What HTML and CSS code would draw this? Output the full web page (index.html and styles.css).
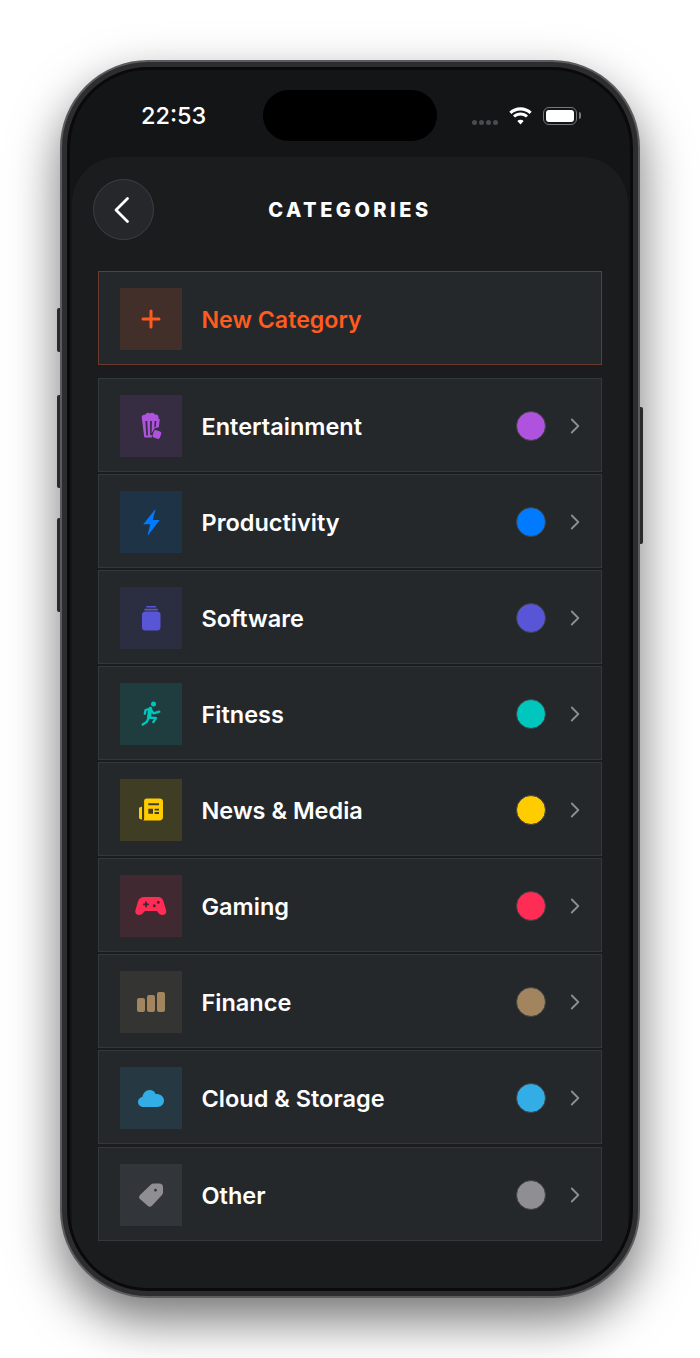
FILE: index.html
```html
<!DOCTYPE html>
<html lang="en">
<head>
    <meta charset="UTF-8">
    <meta name="viewport" content="width=device-width, initial-scale=1.0">
    <title>Categories</title>
    <link rel="stylesheet" href="styles.css">
</head>
<body>

<div class="phone">
    <span class="side-btn mute"></span>
    <span class="side-btn vol-up"></span>
    <span class="side-btn vol-down"></span>
    <span class="side-btn power"></span>

    <div class="screen">
        <div class="status-bar">
            <div class="time">22:53</div>
            <div class="island"></div>
            <div class="status-icons">
                <div class="signal"><i></i><i></i><i></i><i></i></div>
                <svg class="wifi" width="23" height="18" viewBox="1 0 21 17.5" preserveAspectRatio="none">
                    <path d="M11.5 3.4c3.2 0 6.1 1.2 8.3 3.3l1.9-2.1C19 2 15.4.3 11.5.3S4 2 1.3 4.6l1.9 2.1c2.2-2.1 5.1-3.300 8.300-3.300z" fill="#fff"/>
                    <path d="M11.5 8.3c1.900 0 3.700.7 5 2l1.900-2.100c-1.800-1.800-4.300-2.900-6.900-2.900S6.400 6.400 4.600 8.200l1.900 2.100c1.300-1.300 3.100-2 5-2z" fill="#fff"/>
                    <path d="M11.5 12.400c-1.100 0-2.100.4-2.900 1.200l2.900 3.500 2.900-3.500c-.8-.8-1.800-1.200-2.900-1.200z" fill="#fff"/>
                </svg>
                <div class="battery"><div class="battery-fill"></div></div>
            </div>
        </div>

        <div class="panel">
            <div class="top-bar">
                <button class="back-btn">
                    <svg width="20" height="30" viewBox="0 0 20 30"><path d="M15.5 3.5 4 15l11.5 11.5" fill="none" stroke="#fff" stroke-width="2.8" stroke-linecap="round" stroke-linejoin="round"/></svg>
                </button>
                <div class="title">CATEGORIES</div>
            </div>

            <div class="new-row">
                <div class="tile">
                    <svg width="32" height="32" viewBox="0 0 32 32"><path d="M16 8v16M8 16h16" fill="none" stroke="currentColor" stroke-width="3" stroke-linecap="round"/></svg>
                </div>
                <div class="name">New Category</div>
            </div>

            <div class="list">
                <div class="row purple">
                    <div class="tile">
                        <svg width="32" height="32" viewBox="0 0 32 32">
                            <path d="M6.8 8.200c-.7-2.400 1.300-4.100 3.400-3.400.6-1.900 3.400-2.900 5-1.400 1.600-1.200 4.100-.6 4.700 1.300 2.300-.6 4.200 1.300 3.600 3.500l-.2 1.800H7.100z" fill="currentColor"/>
                            <path fill-rule="evenodd" d="M7 9h17.800l-1 8.300-4.100.9-3.200 5.300.5 4H10.200c-.6 0-1-.4-1.100-.9zM10.300 11l1 14.500h1.700l-.8-14.500zM15.100 11v14h1.500l.3-14zM19.700 11l-.5 6.500 1.500-.4.700-6.100z" fill="currentColor"/>
                            <rect x="18" y="20.600" width="7.800" height="7.800" rx="2" transform="rotate(20 21.900 24.500)" fill="currentColor"/>
                        </svg>
                    </div>
                    <div class="name">Entertainment</div>
                    <div class="dot"></div>
                    <svg class="chevron" width="10" height="16" viewBox="0 0 10 16"><path d="M1.8 1.500 8.300 8l-6.500 6.500" fill="none" stroke="currentColor" stroke-width="1.8" stroke-linecap="round" stroke-linejoin="round"/></svg>
                </div>

                <div class="row blue">
                    <div class="tile">
                        <svg width="32" height="32" viewBox="0 0 32 32"><path d="M19.8 3.700 8.300 18.200h6.900l-2.500 10.600c-.1.500.3.700.6.300l11.400-15h-7l2.700-10c.2-.6-.3-.8-.6-.4z" fill="currentColor"/></svg>
                    </div>
                    <div class="name">Productivity</div>
                    <div class="dot"></div>
                    <svg class="chevron" width="10" height="16" viewBox="0 0 10 16"><path d="M1.8 1.500 8.300 8l-6.500 6.500" fill="none" stroke="currentColor" stroke-width="1.8" stroke-linecap="round" stroke-linejoin="round"/></svg>
                </div>

                <div class="row indigo">
                    <div class="tile">
                        <svg width="32" height="32" viewBox="0 0 32 32">
                            <rect x="7" y="9.6" width="18.5" height="19" rx="3.5" fill="currentColor"/>
                            <rect x="9.2" y="6.7" width="14" height="1.7" rx=".8" fill="currentColor"/>
                            <rect x="11.2" y="3.9" width="10" height="1.7" rx=".8" fill="currentColor"/>
                        </svg>
                    </div>
                    <div class="name">Software</div>
                    <div class="dot"></div>
                    <svg class="chevron" width="10" height="16" viewBox="0 0 10 16"><path d="M1.8 1.500 8.300 8l-6.500 6.500" fill="none" stroke="currentColor" stroke-width="1.8" stroke-linecap="round" stroke-linejoin="round"/></svg>
                </div>

                <div class="row teal">
                    <div class="tile">
                        <svg width="32" height="32" viewBox="0 0 32 32">
                            <circle cx="18.5" cy="6" r="2.5" fill="currentColor"/>
                            <path d="M15.3 10.800 14 19" fill="none" stroke="currentColor" stroke-width="4" stroke-linecap="round"/>
                            <path d="M24.3 13.700 18.500 15.300l-3.200-4.500-4.700 1.200-.8 3.700M14 19.500l7 .6-2.700 4M13.700 19.700l-2 4.200-4 2.600" fill="none" stroke="currentColor" stroke-width="2.3" stroke-linecap="round" stroke-linejoin="round"/>
                        </svg>
                    </div>
                    <div class="name">Fitness</div>
                    <div class="dot"></div>
                    <svg class="chevron" width="10" height="16" viewBox="0 0 10 16"><path d="M1.8 1.500 8.300 8l-6.500 6.500" fill="none" stroke="currentColor" stroke-width="1.8" stroke-linecap="round" stroke-linejoin="round"/></svg>
                </div>

                <div class="row yellow">
                    <div class="tile">
                        <svg width="32" height="32" viewBox="0 0 32 32">
                            <path d="M4 13.800 7 12.400v13.100c-1.800 0-3-.6-3-2.200z" fill="currentColor"/>
                            <path fill-rule="evenodd" d="M11.6 4.500h13.100c2 0 3.300 1.200 3.300 3.200v15.600c0 2-1.300 3.200-3.300 3.200H8.200c.6-.5.900-1.100.9-1.800V7c0-1.500 1-2.500 2.500-2.500zM13.300 9.300v1.900H24V9.300zM13.300 14.800v5h4.700v-5zm6.300 0v1.800H24v-1.800zm0 3.300v1.800H24v-1.800z" fill="currentColor"/>
                        </svg>
                    </div>
                    <div class="name">News &amp; Media</div>
                    <div class="dot"></div>
                    <svg class="chevron" width="10" height="16" viewBox="0 0 10 16"><path d="M1.8 1.500 8.300 8l-6.500 6.500" fill="none" stroke="currentColor" stroke-width="1.8" stroke-linecap="round" stroke-linejoin="round"/></svg>
                </div>

                <div class="row red">
                    <div class="tile">
                        <svg width="32" height="32" viewBox="0 0 32 32">
                            <path fill-rule="evenodd" d="M9 7h14c3 0 4.500 1.500 5.500 4.500l2.500 8.500c.8 3-.8 5-3.500 5-2 0-3.200-1-4.200-2.300L22 21H10l-1.800 1.700C7.200 24 6 25 4 25c-2.700 0-4.300-2-3.500-5L3 11.500C4 8.500 6 7 9 7zM10.100 11.500v2h-2v1.800h2v2h1.800v-2h2v-1.800h-2v-2zM19.300 14.200a1.500 1.500 0 1 0 0 3 1.500 1.500 0 0 0 0-3zM23.300 10.800a1.500 1.500 0 1 0 0 3 1.500 1.500 0 0 0 0-3z" fill="currentColor"/>
                        </svg>
                    </div>
                    <div class="name">Gaming</div>
                    <div class="dot"></div>
                    <svg class="chevron" width="10" height="16" viewBox="0 0 10 16"><path d="M1.8 1.500 8.300 8l-6.500 6.500" fill="none" stroke="currentColor" stroke-width="1.8" stroke-linecap="round" stroke-linejoin="round"/></svg>
                </div>

                <div class="row brown">
                    <div class="tile">
                        <svg width="32" height="32" viewBox="0 0 32 32">
                            <rect x="2" y="12" width="8" height="14" rx="2" fill="currentColor"/>
                            <rect x="12" y="9" width="8" height="17" rx="2" fill="currentColor"/>
                            <rect x="22" y="6" width="8" height="20" rx="2" fill="currentColor"/>
                        </svg>
                    </div>
                    <div class="name">Finance</div>
                    <div class="dot"></div>
                    <svg class="chevron" width="10" height="16" viewBox="0 0 10 16"><path d="M1.8 1.500 8.300 8l-6.500 6.500" fill="none" stroke="currentColor" stroke-width="1.8" stroke-linecap="round" stroke-linejoin="round"/></svg>
                </div>

                <div class="row cyan">
                    <div class="tile">
                        <svg width="32" height="32" viewBox="0 0 32 32"><path d="M8.5 25C5.300 25 3 22.800 3 20c0-2.600 1.900-4.500 4.300-4.900C8 11.200 10.900 8 14.700 8c2.800 0 5 1.600 6 3.900 4.300-.3 8.300 2.300 8.300 6.700 0 3.900-3 6.400-6.800 6.400z" fill="currentColor"/></svg>
                    </div>
                    <div class="name">Cloud &amp; Storage</div>
                    <div class="dot"></div>
                    <svg class="chevron" width="10" height="16" viewBox="0 0 10 16"><path d="M1.8 1.500 8.300 8l-6.500 6.500" fill="none" stroke="currentColor" stroke-width="1.8" stroke-linecap="round" stroke-linejoin="round"/></svg>
                </div>

                <div class="row gray last">
                    <div class="tile">
                        <svg width="32" height="32" viewBox="0 0 32 32">
                            <path fill-rule="evenodd" d="M18.5 4.500h6c2 0 3.500 1.500 3.500 3.500v5.500c0 1-.3 1.800-1 2.500L17 26.800c-1.300 1.300-3 1.300-4.300 0l-7.500-6.500c-1.400-1.300-1.500-3-.2-4.400L16 5.500c.8-.7 1.500-1 2.500-1zM20.500 9.800a1.400 1.400 0 1 0 0 2.800 1.400 1.400 0 0 0 0-2.800z" fill="currentColor"/>
                        </svg>
                    </div>
                    <div class="name">Other</div>
                    <div class="dot"></div>
                    <svg class="chevron" width="10" height="16" viewBox="0 0 10 16"><path d="M1.8 1.500 8.300 8l-6.500 6.500" fill="none" stroke="currentColor" stroke-width="1.8" stroke-linecap="round" stroke-linejoin="round"/></svg>
                </div>
            </div>
        </div>
    </div>
</div>

</body>
</html>
```
FILE: styles.css
```css
* {
    box-sizing: border-box;
}
body {
    margin: 0;
    padding-top: 60px;
    height: 1358px;
    overflow: hidden;
    background: #fff;
    font-family: Inter, "Liberation Sans", sans-serif;
    color: #fff;
}
.phone {
    position: relative;
    width: 580px;
    height: 1238px;
    margin: 0 auto;
    padding: 5px;
    background: #2d2d2f;
    border: 2px solid #5c5c60;
    border-radius: 88px;
    box-shadow: 0 22px 50px rgba(0, 0, 0, 0.55);
}
.side-btn {
    position: absolute;
    width: 3px;
    background: #2a2a2c;
}
.mute {
    left: -5px;
    top: 246px;
    height: 44px;
    border-radius: 2px 0 0 2px;
}
.vol-up {
    left: -5px;
    top: 333px;
    height: 93px;
    border-radius: 2px 0 0 2px;
}
.vol-down {
    left: -5px;
    top: 456px;
    height: 94px;
    border-radius: 2px 0 0 2px;
}
.power {
    right: -5px;
    top: 345px;
    height: 137px;
    border-radius: 0 2px 2px 0;
}
.screen {
    height: 100%;
    display: flex;
    flex-direction: column;
    background: #141517;
    border: 3px solid #0a0a0b;
    border-radius: 81px;
    overflow: hidden;
}

/* status bar */
.status-bar {
    flex: none;
    height: 87px;
    display: grid;
    grid-template-columns: 1fr 174px 1fr;
    align-items: start;
}
.time {
    padding: 28px 0 0 71px;
    font-size: 23.5px;
    font-weight: 500;
    line-height: 35px;
    color: #fff;
}
.island {
    height: 51px;
    margin-top: 20px;
    background: #000;
    border-radius: 26px;
}
.status-icons {
    display: flex;
    justify-content: flex-end;
    align-items: flex-start;
    padding: 37px 53px 0 0;
}
.signal {
    display: flex;
    gap: 2px;
    margin: 13px 11px 0 0;
}
.signal i {
    width: 5px;
    height: 5px;
    border-radius: 50%;
    background: #4a4b4e;
}
.wifi {
    margin-right: 11px;
}
.battery {
    position: relative;
    width: 34px;
    height: 18px;
    padding: 2px;
    border: 1.5px solid #77787b;
    border-radius: 6px;
}
.battery::after {
    content: "";
    position: absolute;
    right: -4.5px;
    top: 4px;
    width: 2px;
    height: 7px;
    background: #77787b;
    border-radius: 0 2px 2px 0;
}
.battery-fill {
    height: 100%;
    background: #fff;
    border-radius: 3px;
}

/* main panel */
.panel {
    flex: 1;
    margin: 0 2px;
    padding: 22px 26px 0;
    background: #1b1c1e;
    border-radius: 46px 46px 0 0;
}
.top-bar {
    display: grid;
    grid-template-columns: 61px 1fr 61px;
    align-items: center;
    margin: 0 -5px 31px;
}
.back-btn {
    width: 61px;
    height: 61px;
    display: flex;
    align-items: center;
    justify-content: center;
    padding: 0 3px 0 0;
    background: #25272b;
    border: 1px solid #3c3f44;
    border-radius: 50%;
}
.title {
    text-align: center;
    font-size: 20px;
    font-weight: 800;
    letter-spacing: 3.5px;
    line-height: 24px;
}

/* rows */
.new-row, .row {
    display: flex;
    align-items: center;
    height: 94px;
    padding: 2px 21px 0;
    background: #24282b;
    border: 1px solid #33383b;
}
.new-row {
    margin-bottom: 13px;
    color: #ff5a1f;
    border-color: #6b3a2c;
}
.new-row .tile {
    background: #432f29;
}
.new-row .name {
    font-size: 23.2px;
    color: #ff5a1f;
}
.list {
    display: flex;
    flex-direction: column;
    gap: 2px;
}
.row.last {
    margin-top: 1px;
}
.tile {
    flex: none;
    width: 62px;
    height: 62px;
    display: flex;
    align-items: center;
    justify-content: center;
    background: color-mix(in srgb, currentColor 13%, #24282b);
}
.name {
    flex: 1;
    margin: 2px 0 0 19.5px;
    font-size: 23.5px;
    font-weight: 600;
    line-height: 30px;
    color: #fff;
}
.dot {
    flex: none;
    width: 30px;
    height: 30px;
    margin-right: 24.5px;
    background: currentColor;
    border: 1px solid #3f4245;
    border-radius: 50%;
}
.chevron {
    flex: none;
    color: #8e8e93;
}
.purple { color: #af52de; }
.blue { color: #007aff; }
.indigo { color: #5856d6; }
.teal { color: #00c7be; }
.yellow { color: #ffcc00; }
.red { color: #ff2d55; }
.brown { color: #a2845e; }
.cyan { color: #32ade6; }
.gray { color: #8e8e93; }
```
